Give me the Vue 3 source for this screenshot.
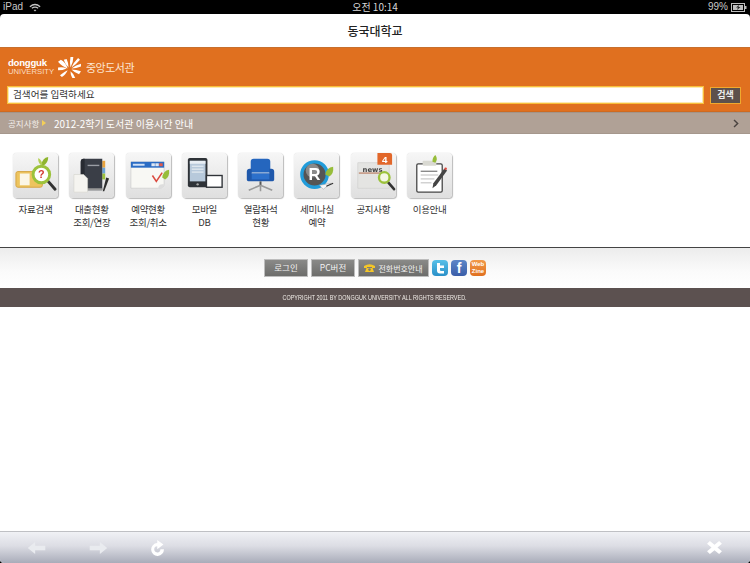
<template>
  <div class="device">
    <div class="status">
      <div class="st-left">
        <span>iPad</span>
        <svg width="12" height="9" viewBox="0 0 14 10">
          <path d="M1 4 Q7 -1 13 4" fill="none" stroke="#c4c4c4" stroke-width="1.5" />
          <path d="M3.3 6 Q7 3 10.7 6" fill="none" stroke="#c4c4c4" stroke-width="1.5" />
          <path d="M5.4 8 Q7 7 8.6 8 L7 9.6Z" fill="#c4c4c4" />
        </svg>
      </div>
      <div class="st-time">오전 10:14</div>
      <div class="st-right">
        <span>99%</span>
        <svg width="16" height="9" viewBox="0 0 16 9">
          <rect x="0.5" y="0.5" width="13" height="8" fill="none" stroke="#bdbdbd" />
          <rect x="2" y="2" width="10" height="5" fill="#bdbdbd" />
          <rect x="14" y="3" width="1.5" height="3" fill="#bdbdbd" />
          <path d="M8 2 L5 4.6 H7 L6 7 L9.5 4 H7.5Z" fill="#222" />
        </svg>
      </div>
    </div>

    <div class="screen">
      <div class="nav">동국대학교</div>

      <div class="header">
        <div class="logo">
          <div class="logo-word">
            <b>dongguk</b>
            <span>UNIVERSITY</span>
          </div>
          <svg class="emblem" width="25" height="21" viewBox="0 0 24 22">
            <g fill="#fff">
              <path d="M10 12 Q4 10 0 5 L3 3 Q8 6 10 12Z" />
              <path d="M11 11 Q7 7 6 3 L9 2 Q11 6 11 11Z" />
              <path d="M13 11 Q12 5 13 0 L16 0 Q16 6 13 11Z" />
              <path d="M14 11 Q16 6 21 1 L23 3 Q19 8 14 11Z" />
              <path d="M14 12 Q19 8 24 7 L24 10 Q19 12 14 12Z" />
              <path d="M14 13 Q19 13 24 15 L22 18 Q17 16 14 13Z" />
              <path d="M13 15 Q16 17 18 22 L15 22 Q13 19 13 15Z" />
              <path d="M10 14 Q8 19 4 21 L2 19 Q6 16 10 14Z" />
              <path d="M9 12 Q5 14 0 14 L0 11 Q5 10 9 12Z" />
            </g>
          </svg>
          <span class="logo-lib">중앙도서관</span>
        </div>
        <div class="search">
          <div class="search-input">검색어를 입력하세요</div>
          <div class="search-btn">검색</div>
        </div>
      </div>

      <div class="notice">
        <span class="notice-tag">공지사항</span>
        <i class="notice-mark"></i>
        <span class="notice-title">2012-2학기 도서관 이용시간 안내</span>
        <svg class="notice-arrow" width="6" height="9" viewBox="0 0 7 10">
          <path d="M1.2 1 L5.4 5 L1.2 9" fill="none" stroke="#4a4340" stroke-width="1.7" />
        </svg>
      </div>

      <div class="menu">
        <div class="item">
          <div class="tile">
            <svg viewBox="0 0 46 46" width="45" height="45">
              <rect x="3" y="19" width="27" height="16" rx="2" fill="#edc45e" stroke="#d5a544" />
              <rect x="7" y="21" width="10" height="12" fill="#fbf6e6" />
              <path d="M29 12 Q30 5 36 4 Q36 10 31 13Z" fill="#8fb52e" />
              <path d="M28 12 Q25 8 26 5 Q30 8 30 12Z" fill="#b3cf54" />
              <line x1="36" y1="29" x2="43" y2="37" stroke="#333" stroke-width="3" stroke-linecap="round" />
              <circle cx="29" cy="22" r="8.5" fill="#fff" stroke="#9cc23c" stroke-width="3" />
              <text x="29" y="26" text-anchor="middle" class="ico-q">?</text>
            </svg>
          </div>
          <p>자료검색</p>
        </div>

        <div class="item">
          <div class="tile">
            <svg viewBox="0 0 46 46" width="45" height="45">
              <rect x="34" y="8" width="3" height="7" fill="#e8a33d" />
              <rect x="34" y="15" width="3" height="6" fill="#6aa3d8" />
              <rect x="34" y="21" width="3" height="6" fill="#9cc23c" />
              <path d="M12 9 Q12 6 15 6 H34 V38 H16 L12 34Z" fill="#3a3e47" />
              <path d="M12 9 Q12 6 15 6 H16 V34 L12 34Z" fill="#282b32" />
              <rect x="19" y="12" width="12" height="1.4" fill="#9a9da4" />
              <path d="M12 34 L16 38 H34 V36 H17Z" fill="#999" />
              <path d="M5 22 H15 L19 26 V40 H5Z" fill="#f5f4f0" stroke="#d2d2cc" stroke-width=".6" />
              <path d="M38 25 L41 26 L36 39 L34.5 39Z" fill="#2e2e2e" />
            </svg>
          </div>
          <p>대출현황<br />조회/연장</p>
        </div>

        <div class="item">
          <div class="tile">
            <svg viewBox="0 0 46 46" width="45" height="45">
              <path d="M5 9 H39 V32 Q39 36 33 36 H5Z" fill="#f8f8f4" stroke="#ccc" stroke-width=".7" />
              <rect x="5" y="9" width="34" height="6" fill="#2a6cc4" />
              <rect x="7" y="11" width="12" height="2" fill="#cfe0f6" />
              <rect x="26" y="10.5" width="3.5" height="3" fill="#dfe7f2" />
              <rect x="30" y="10.5" width="3.5" height="3" fill="#dfe7f2" />
              <rect x="34" y="10.5" width="3.5" height="3" fill="#e25a4a" />
              <path d="M27 23 L31 29 L37 20" fill="none" stroke="#db4b3f" stroke-width="1.6" />
              <path d="M37 25 Q38 18 44 17 Q45 24 40 27Z" fill="#97bd3a" />
              <path d="M33 36 Q33 31 39 32 Q39 36 33 36Z" fill="#ddd" />
            </svg>
          </div>
          <p>예약현황<br />조회/취소</p>
        </div>

        <div class="item">
          <div class="tile">
            <svg viewBox="0 0 46 46" width="45" height="45">
              <rect x="6" y="5" width="20" height="30" rx="2" fill="#2f3338" />
              <rect x="8" y="8" width="16" height="21" fill="#b7c9db" />
              <rect x="8" y="8" width="16" height="3" fill="#e8eef4" />
              <rect x="10" y="13" width="12" height="1" fill="#eef2f6" />
              <rect x="10" y="16" width="12" height="1" fill="#eef2f6" />
              <rect x="10" y="19" width="12" height="1" fill="#eef2f6" />
              <circle cx="16" cy="32" r="1.2" fill="#aaa" />
              <rect x="25" y="23" width="16" height="12" fill="#fff" stroke="#2f3338" stroke-width="1.4" />
            </svg>
          </div>
          <p>모바일<br />DB</p>
        </div>

        <div class="item">
          <div class="tile">
            <svg viewBox="0 0 46 46" width="45" height="45">
              <path d="M13 9 Q13 6 16 6 H30 Q33 6 33 9 V20 H13Z" fill="#2566be" />
              <path d="M9 19 Q9 16 12 16 H14 V21 H32 V16 H34 Q37 16 37 19 V27 Q37 29 34 29 H12 Q9 29 9 27Z" fill="#1f58ab" />
              <rect x="14" y="21" width="18" height="6" fill="#2c70cb" />
              <rect x="22" y="29" width="2" height="4" fill="#555" />
              <path d="M23 33 L11 38 M23 33 L35 38 M23 33 V39" stroke="#9a9a9a" stroke-width="1.6" fill="none" />
            </svg>
          </div>
          <p>열람좌석<br />현황</p>
        </div>

        <div class="item">
          <div class="tile">
            <svg viewBox="0 0 46 46" width="45" height="45">
              <circle cx="21" cy="22" r="13" fill="#555" stroke="#229cda" stroke-width="3.4" />
              <circle cx="19" cy="18" r="7" fill="#8a8a8a" />
              <text x="21" y="28" text-anchor="middle" class="ico-r">R</text>
              <path d="M32 22 Q33 15 40 14 Q41 21 36 24Z" fill="#97bd3a" />
              <path d="M26 33 L38 31 L30 37Z" fill="#f8f8f8" stroke="#999" stroke-width=".5" />
              <line x1="33" y1="34" x2="40" y2="31" stroke="#333" stroke-width="1.2" />
            </svg>
          </div>
          <p>세미나실<br />예약</p>
        </div>

        <div class="item">
          <div class="tile">
            <svg viewBox="0 0 46 46" width="45" height="45">
              <rect x="7" y="10" width="32" height="26" fill="#e4e4e2" stroke="#cfcfcd" stroke-width=".7" />
              <text x="22" y="19" text-anchor="middle" class="ico-news">news</text>
              <rect x="8" y="20" width="26" height="1" fill="#b36a4a" />
              <line x1="38" y1="30" x2="44" y2="37" stroke="#333" stroke-width="2.6" stroke-linecap="round" />
              <circle cx="34" cy="25" r="5.4" fill="#f4f7e6" stroke="#9cc23c" stroke-width="2.4" />
              <path d="M27 0 H40 Q42 0 42 2 V12 H27Z" fill="#e2672a" />
              <text x="34.5" y="10" text-anchor="middle" class="ico-badge">4</text>
            </svg>
          </div>
          <p>공지사항</p>
        </div>

        <div class="item">
          <div class="tile">
            <svg viewBox="0 0 46 46" width="45" height="45">
              <rect x="10" y="11" width="26" height="29" rx="1.5" fill="#fff" stroke="#444" stroke-width="1.3" />
              <rect x="16" y="8" width="14" height="5" rx="1" fill="#d9d9d2" />
              <rect x="14" y="18" width="17" height="1.4" fill="#888" />
              <rect x="14" y="22" width="18" height="1" fill="#bbb" />
              <rect x="14" y="26" width="14" height="1" fill="#bbb" />
              <rect x="14" y="30" width="11" height="1" fill="#bbb" />
              <path d="M26 9 Q26 4 29 2 Q32 6 29 10Z" fill="#97bd3a" />
              <path d="M38 16 L41 18 L30 33 L26 36 L27 31Z" fill="#444" />
              <circle cx="39.5" cy="16" r="1.3" fill="#d9483f" />
            </svg>
          </div>
          <p>이용안내</p>
        </div>
      </div>

      <div class="footer">
        <div class="btn">로그인</div>
        <div class="btn">PC버전</div>
        <div class="btn btn-tel">
          <svg width="11" height="8" viewBox="0 0 11 8">
            <path d="M0 2 Q5.5 -1.5 11 2 V4 H8 V3 H3 V4 H0Z" fill="#f4c628" />
            <path d="M2.5 4 H8.5 L10 8 H1Z" fill="#f4c628" />
            <circle cx="5.5" cy="5.6" r="1.3" fill="#7d7a6e" />
          </svg>
          전화번호안내
        </div>
        <div class="social tw">
          <svg width="16" height="16" viewBox="0 0 16 16">
            <path d="M5 3 H8 V5.5 H12 V8 H8 V10 Q8 11 9 11 H12 V13.4 H8 Q5 13.4 5 10.5Z" fill="#fff" />
          </svg>
        </div>
        <div class="social fb">f</div>
        <div class="social wz">Web<br />Zine</div>
      </div>

      <div class="copy"><span>COPYRIGHT 2011 BY DONGGUK UNIVERSITY ALL RIGHTS RESERVED.</span></div>

      <div class="blank"></div>

      <div class="toolbar">
        <div class="tools-left">
          <svg width="20" height="12" viewBox="0 0 20 13">
            <path d="M8 0 L0 6.5 L8 13 V9 H19 V4 H8Z" fill="#e9ebef" />
          </svg>
          <svg width="20" height="12" viewBox="0 0 20 13">
            <path d="M12 0 L20 6.5 L12 13 V9 H1 V4 H12Z" fill="#e9ebef" />
          </svg>
          <svg width="17" height="16" viewBox="2 0 13.5 15.5">
            <path d="M8.5 3 A6.2 6.2 0 1 0 15 9 H11.6 A3 3 0 1 1 8.5 6 V9 L14.5 4.4 L8.5 0Z" fill="#fff" />
          </svg>
        </div>
        <svg width="15" height="13" viewBox="0 0 16 14">
          <path d="M3 0 L8 4 L13 0 L16 3 L11.2 7 L16 11 L13 14 L8 10 L3 14 L0 11 L4.8 7 L0 3Z" fill="#fff" />
        </svg>
      </div>
    </div>
  </div>
</template>

<script setup>
</script>

<style>
html, body {
  margin: 0;
  background: #000;
}
</style>

<style scoped>
.device {
  width: 750px;
  height: 563px;
  background: #000;
  display: flex;
  flex-direction: column;
  overflow: hidden;
  font-family: "Noto Sans CJK KR", "Liberation Sans", sans-serif;
}
.status {
  height: 14px;
  flex: none;
  display: grid;
  grid-template-columns: 1fr auto 1fr;
  align-items: center;
  padding: 0 3px;
  color: #c8c8c8;
  font-size: 10px;
  line-height: 14px;
}
.st-left {
  display: flex;
  align-items: center;
  gap: 6px;
  font-family: "Liberation Sans", sans-serif;
  font-size: 10px;
}
.st-time {
  color: #d8d8d8;
}
.st-right {
  display: flex;
  justify-content: flex-end;
  align-items: center;
  gap: 3px;
  font-family: "Liberation Sans", sans-serif;
  font-size: 10px;
}
.screen {
  flex: 1;
  min-height: 0;
  display: flex;
  flex-direction: column;
  background: #fff;
  border-radius: 4px;
  overflow: hidden;
}
.nav {
  height: 33px;
  flex: none;
  display: flex;
  align-items: center;
  justify-content: center;
  padding-bottom: 1px;
  box-sizing: border-box;
  font-size: 12px;
  font-weight: 500;
  color: #222;
}
.header {
  height: 65px;
  flex: none;
  box-sizing: border-box;
  background: #e0701f;
  border-top: 1px solid #c7702e;
  border-bottom: 1px solid #cf6a20;
  padding: 6px 9px 0 7px;
  display: flex;
  flex-direction: column;
}
.logo {
  height: 26px;
  display: flex;
  align-items: center;
  color: #fff;
}
.logo-word {
  display: flex;
  flex-direction: column;
  width: 49px;
  margin-left: 1px;
  font-family: "Liberation Sans", sans-serif;
}
.logo-word b {
  font-size: 9.6px;
  line-height: 10px;
  letter-spacing: -0.25px;
}
.logo-word span {
  font-size: 7.7px;
  line-height: 8px;
  color: #fbdcc2;
}
.logo-lib {
  margin-left: 4px;
  font-size: 11px;
  letter-spacing: -0.5px;
  color: #fde6d2;
}
.search {
  display: flex;
  align-items: center;
  gap: 6px;
  margin-top: 6px;
}
.search-input {
  flex: 1;
  height: 18px;
  box-sizing: border-box;
  background: #fff;
  border: 1px solid #f8bf3a;
  box-shadow: inset 0 0 0 1px #fde9b4;
  padding-left: 5px;
  font-size: 9.6px;
  line-height: 15px;
  color: #333;
}
.search-btn {
  width: 31px;
  height: 17px;
  box-sizing: border-box;
  background: #5d504c;
  border: 1px solid #f0a92e;
  color: #eee;
  font-size: 9px;
  font-weight: 700;
  line-height: 14px;
  text-align: center;
}
.notice {
  height: 22px;
  flex: none;
  box-sizing: border-box;
  display: flex;
  align-items: center;
  padding: 0 11px 0 8px;
  background: #b0a196;
  border-top: 1px solid #a39488;
  border-bottom: 1px solid #a5978c;
  color: #fff;
}
.notice-tag {
  font-size: 8.5px;
  color: #f3eeea;
  width: 34px;
}
.notice-mark {
  width: 0;
  height: 0;
  border-left: 4px solid #f4cf58;
  border-top: 3px solid transparent;
  border-bottom: 3px solid transparent;
}
.notice-title {
  margin-left: 8px;
  font-size: 10px;
  flex: 1;
}
.menu {
  height: 114px;
  flex: none;
  box-sizing: border-box;
  padding: 19px 0 0 11.5px;
  display: flex;
  align-items: flex-start;
  gap: 8.3px;
  border-bottom: 1px solid #444;
}
.item {
  width: 48px;
  display: flex;
  flex-direction: column;
  align-items: center;
}
.tile {
  width: 45px;
  height: 45px;
  border-radius: 4px;
  background: linear-gradient(#f6f6f6, #dfdfdf);
  box-shadow: 1px 1px 1px #bbb, 0 0 1px #bbb;
  overflow: hidden;
}
.tile svg {
  display: block;
  filter: blur(0.3px);
}
.item p {
  margin: 5px -6px 0;
  font-size: 9.5px;
  line-height: 12.5px;
  letter-spacing: -0.3px;
  text-align: center;
  color: #333;
  white-space: nowrap;
}
.ico-q {
  font: 700 11px "Liberation Sans", sans-serif;
  fill: #d33a32;
}
.ico-r {
  font: 700 17px "Liberation Sans", sans-serif;
  fill: #fff;
}
.ico-news {
  font: 700 7px "DejaVu Sans", sans-serif;
  fill: #444;
}
.ico-badge {
  font: 700 10px "Liberation Sans", sans-serif;
  fill: #fff;
}
.footer {
  height: 40px;
  flex: none;
  box-sizing: border-box;
  background: linear-gradient(#ececec, #fbfbfb 60%, #fff);
  display: flex;
  align-items: center;
  justify-content: center;
  gap: 3px;
}
.btn {
  width: 44px;
  height: 18px;
  box-sizing: border-box;
  border: 1px solid #bdbdbd;
  background: linear-gradient(#8a8a88, #6d6d6b);
  color: #f2f2f2;
  font-size: 8.5px;
  line-height: 15px;
  text-align: center;
}
.btn-tel {
  width: 71px;
  display: flex;
  align-items: center;
  justify-content: center;
  gap: 3px;
  font-size: 8px;
}
.social {
  width: 16px;
  height: 16px;
  border-radius: 4px;
  color: #fff;
  text-align: center;
  font-family: "Liberation Sans", sans-serif;
  font-weight: 700;
  overflow: hidden;
}
.tw {
  background: linear-gradient(#58c0e8, #2a90c8);
}
.tw svg {
  display: block;
}
.fb {
  background: linear-gradient(#5c86c8, #3a5da8);
  font-size: 14px;
  line-height: 17px;
}
.wz {
  background: linear-gradient(#f29a4a, #e0701f);
  font-size: 6px;
  line-height: 7px;
  padding-top: 1px;
  box-sizing: border-box;
}
.copy {
  height: 19px;
  flex: none;
  display: flex;
  justify-content: center;
  background: #5c5150;
  color: #efebe6;
  font-family: "Liberation Sans", sans-serif;
  font-size: 6.5px;
  line-height: 19px;
  white-space: nowrap;
}
.copy span {
  display: inline-block;
  transform: scaleX(0.84);
}
.blank {
  flex: 1;
  background: #fff;
}
.toolbar {
  height: 32px;
  flex: none;
  box-sizing: border-box;
  border-top: 1px solid #bfc0c4;
  background: linear-gradient(#f0f1f5, #dcdde4 45%, #a9acb9);
  display: flex;
  align-items: center;
  justify-content: space-between;
  padding: 0 28px 0 27px;
}
.tools-left {
  display: flex;
  align-items: center;
  gap: 41px;
}
</style>
